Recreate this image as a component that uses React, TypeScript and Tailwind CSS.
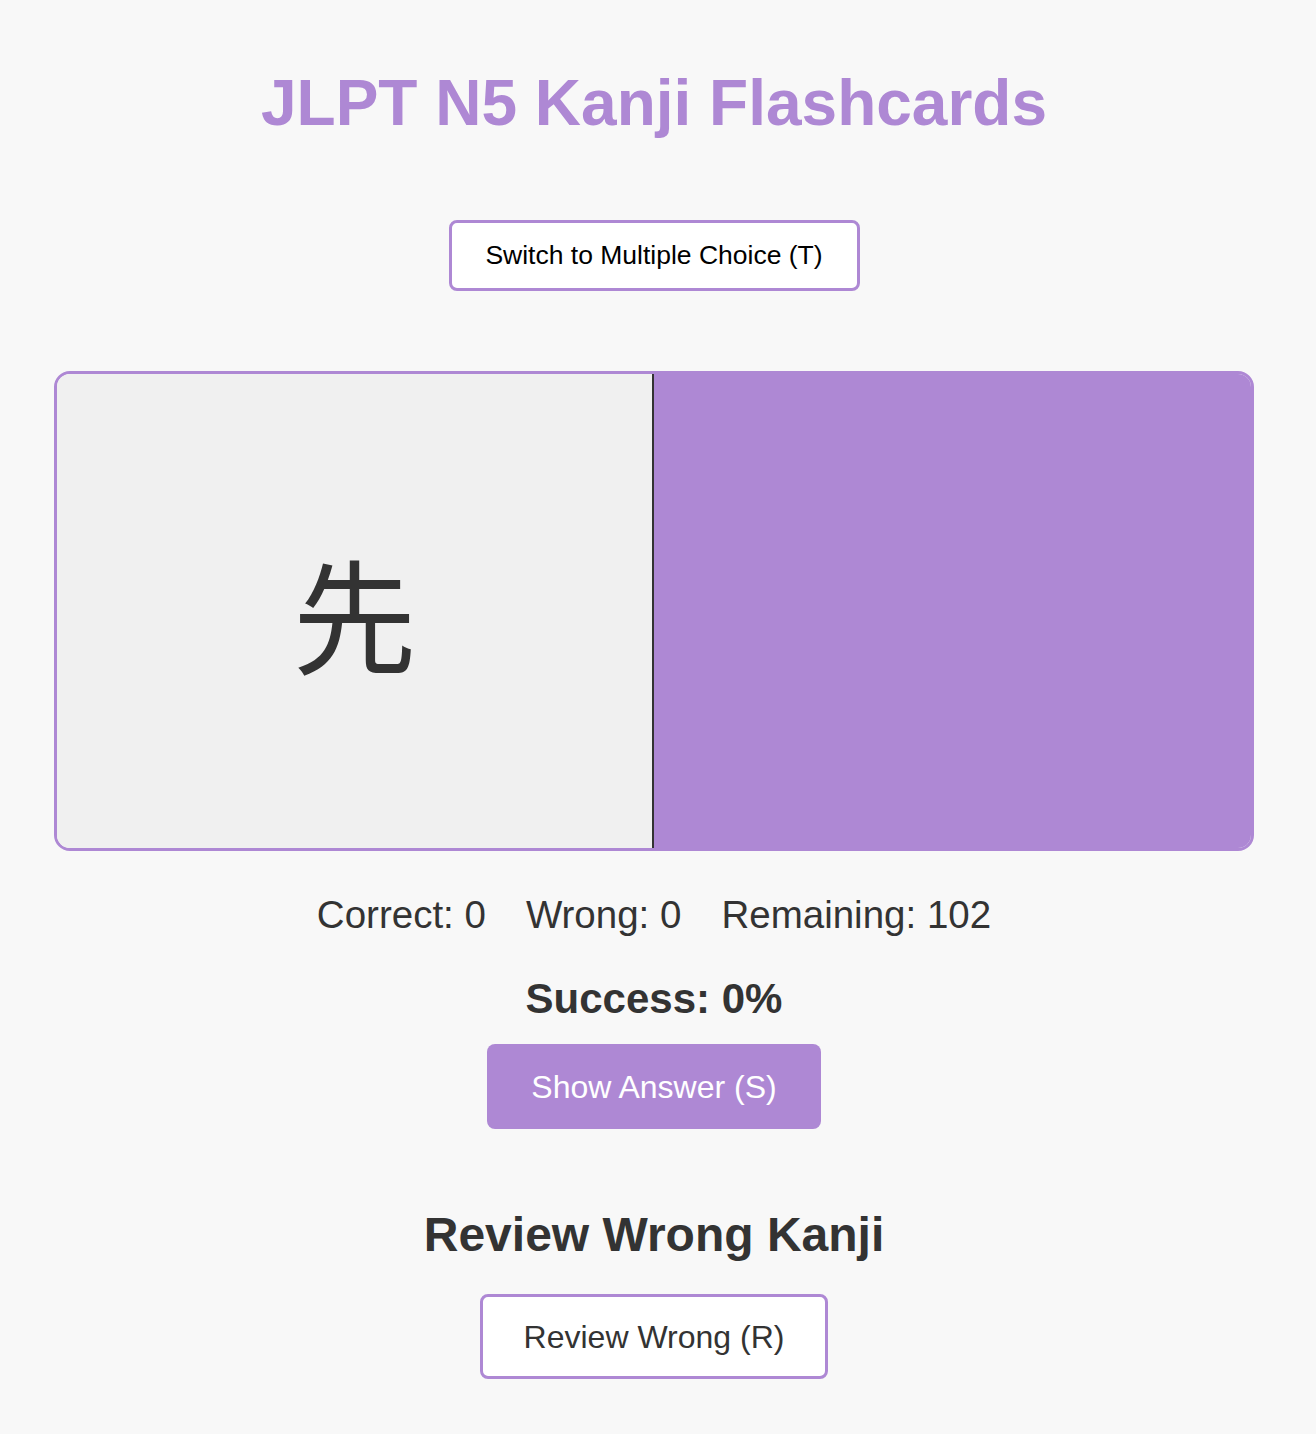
import React from "react";

const stats = [
  { label: "Correct", value: 0 },
  { label: "Wrong", value: 0 },
  { label: "Remaining", value: 102 },
];

export default function App() {
  return (
    <div className="min-h-[1434px] w-full bg-[#f8f8f8] font-['Liberation_Sans',Arial,sans-serif] text-[#333]">
      <div className="flex w-[1308px] flex-col items-center pt-[66px]">
        <h1 className="text-[64px] font-bold leading-[74px] text-[#ae88d4]">JLPT N5 Kanji Flashcards</h1>

        <button className="mt-[80px] h-[71px] w-[411px] rounded-[8px] border-[3px] border-[#ae88d4] bg-white text-[26.5px] text-black">
          Switch to Multiple Choice (T)
        </button>

        <div className="mt-[80px] flex h-[480px] w-[1200px] overflow-hidden rounded-[16px] border-[3px] border-[#ae88d4]">
          <div className="flex w-1/2 items-center justify-center border-r-2 border-[#333] bg-[#f0f0f0]">
            <span className="font-['Noto_Sans_CJK_JP',sans-serif] text-[124px] leading-none text-[#333]">先</span>
          </div>
          <div className="w-1/2 bg-[#ae88d4]" />
        </div>

        <div className="mt-[43px] flex gap-[40px] text-[38.5px] leading-[42px]">
          {stats.map((s) => (
            <span key={s.label}>
              {s.label}: {s.value}
            </span>
          ))}
        </div>

        <p className="mt-[40px] text-[42px] font-bold leading-[46px]">Success: 0%</p>

        <button className="mt-[22px] h-[85px] w-[334px] rounded-[8px] bg-[#ae88d4] text-[32px] text-white">
          Show Answer (S)
        </button>

        <h2 className="mt-[78px] text-[48px] font-bold leading-[56px]">Review Wrong Kanji</h2>

        <button className="mt-[31px] h-[85px] w-[348px] rounded-[8px] border-[3px] border-[#ae88d4] bg-white text-[32px] text-[#333]">
          Review Wrong (R)
        </button>
      </div>
    </div>
  );
}
